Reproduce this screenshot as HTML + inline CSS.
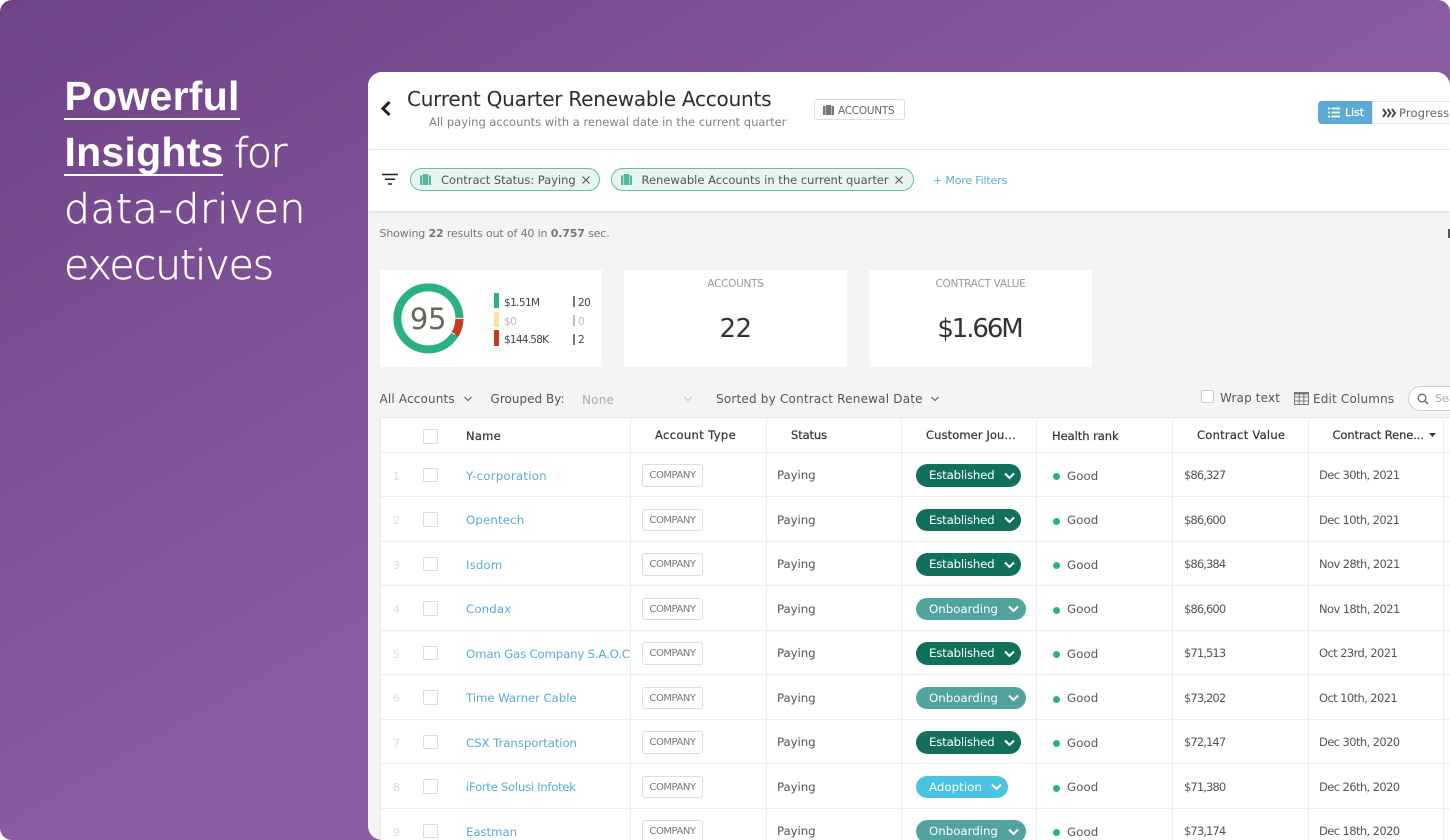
<!DOCTYPE html>
<html lang="en"><head><meta charset="utf-8"><title>Powerful Insights</title>
<style>
*{box-sizing:border-box}
html,body{margin:0;padding:0;width:1450px;height:840px;overflow:hidden;background:#fff}
body{font-family:"DejaVu Sans","Liberation Sans",sans-serif;position:relative}
#bg{position:absolute;left:0;top:0;width:1450px;height:840px;border-radius:12px;background:linear-gradient(to bottom right,#6f4387 0%,#8b5ba1 50%,#8e5ea4 100%)}
.h{position:absolute;left:64px;color:#fff;white-space:nowrap;font-size:41px;line-height:56px;font-weight:300;-webkit-text-stroke:.55px #fff}
.h b{font-family:"Liberation Sans",sans-serif;font-weight:700;letter-spacing:.25px;font-size:41px;-webkit-text-stroke:0}
.u{position:absolute;background:#fff;height:2px}
#card{position:absolute;left:368px;top:72px;width:1082px;height:768px;background:#f4f4f4;border-radius:14px 14px 0 14px;overflow:hidden}
#in{position:absolute;left:-368px;top:-72px;width:1450px;height:840px;filter:blur(.3px)}
.a{position:absolute;white-space:nowrap}
.t{position:absolute;white-space:nowrap;line-height:20px;height:20px}
.w{position:absolute;background:#fff}
.s{position:absolute;overflow:visible}
.chip{position:absolute;top:168px;height:23px;border:1px solid #5fc0a7;border-radius:12px;background:#e7f4f1}
.k{font-size:10.5px;color:#999;text-align:center;letter-spacing:-.3px}
.n{font-size:26px;color:#333;text-align:center;line-height:30px;height:30px;letter-spacing:-.6px}
.tb{font-size:12px;color:#555;letter-spacing:.15px}
.th{font-size:11.5px;color:#333;letter-spacing:.25px;-webkit-text-stroke:.2px #333}
#tbl{position:absolute;left:380px;top:417px;width:1070px;height:423px;background:#fff;border-top:1px solid #e8e8e8;border-left:1px solid #e8e8e8}
.v{position:absolute;top:417px;width:1px;height:423px;background:#ececec}
.r{position:absolute;left:380px;width:1070px;height:44.5px;border-bottom:1.5px solid #ececec}
.r span,.r i{position:absolute;white-space:nowrap;font-style:normal;line-height:44px;top:0}
.no{left:13px;font-size:11px;color:#ddd;top:2px!important}
.cb{position:absolute;left:43px;top:15px;width:14.5px;height:14.5px;border:1px solid #ddd;background:#fff;border-radius:1px}
.nm{left:86px;width:165px;overflow:hidden;font-size:11.8px;color:#5aaad6;letter-spacing:-.1px;top:1px!important}
.co{position:absolute;left:262px;top:11.5px;width:61px;height:22.5px;border:1px solid #ddd;border-radius:3px;font-size:10px;line-height:21px;color:#777;text-align:center;letter-spacing:-.45px;background:#fff}
.st{left:397px;font-size:11.8px;color:#555;letter-spacing:-.08px;top:.5px!important}
.p{position:absolute;left:536px;top:11.5px;height:22.5px;border-radius:12px;color:#fff;font-size:11.8px;line-height:23px;padding-left:13px;letter-spacing:-.22px}
.p svg{position:absolute;top:7.5px}
.e{width:105px;background:#10705c}.e svg{left:87px}
.o{width:110px;background:#50a49c;letter-spacing:-.02px}.o svg{left:91px}
.ad{width:92px;background:#4bc3df;letter-spacing:.03px}.ad svg{left:74px}
.dot{position:absolute;left:673px;top:20.5px;width:7px;height:7px;border-radius:50%;background:#2bb17f}
.gd{left:687px;font-size:11.8px;color:#555;top:1px!important;letter-spacing:.05px}
.val{left:804px;font-size:11.5px;color:#555;letter-spacing:-.9px;top:.5px!important}
.dt{left:939px;font-size:11.5px;color:#555;letter-spacing:-.6px;top:.5px!important}
</style></head><body>
<div id="bg"></div>
<div class="h" style="top:68px;left:64.5px"><b>Powerful</b></div><div class="u" style="left:64px;top:118px;width:176px"></div>
<div class="h" style="top:124px;left:64.5px"><b>Insights</b></div><div class="h" style="top:125px;left:234px;letter-spacing:-1.5px">for</div><div class="u" style="left:64px;top:174px;width:159px"></div>
<div class="h" style="top:181px;letter-spacing:.45px">data-driven</div>
<div class="h" style="top:237px;letter-spacing:-1.05px">executives</div>

<div id="card"><div id="in">
<div class="w" style="left:368px;top:72px;width:1082px;height:77px;box-shadow:0 1px 2px #e4e4e4"></div>
<div class="w" style="left:368px;top:150px;width:1082px;height:61px;box-shadow:0 1px 2px #dedede"></div>

<svg class="s" style="left:378px;top:98px" width="16" height="20"><path d="M11.5 4 L5 10.5 L11.5 17" fill="none" stroke="#222" stroke-width="3"/></svg>
<div class="t" style="left:407px;top:89px;font-size:20px;color:#2c2c2c;letter-spacing:-.23px">Current Quarter Renewable Accounts</div>
<div class="t" style="left:429px;top:112px;font-size:11.5px;color:#808080;letter-spacing:-.01px">All paying accounts with a renewal date in the current quarter</div>
<div class="a" style="left:814px;top:99px;width:91px;height:21px;border:1px solid #ddd;border-radius:3px;background:#fff"></div>
<svg class="s" style="left:822px;top:104px" width="13" height="12"><path d="M4 2V1h5v1h3v9H1V2z" fill="#777"/><path d="M3.500 2v9M9.500 2v9" stroke="#fff" stroke-opacity=".5"/></svg>
<div class="t" style="left:838px;top:101px;font-size:10.5px;color:#666;letter-spacing:-.26px">ACCOUNTS</div>

<div class="a" style="left:1318px;top:101px;width:54px;height:23px;background:#5baad3;border-radius:4px 0 0 4px"></div>
<div class="a" style="left:1372px;top:101px;width:78px;height:23px;background:#fff;border:1px solid #e6e6e6;border-right:0"></div>
<svg class="s" style="left:1328px;top:107px" width="12" height="11"><path d="M0 1.500h2M3.500 1.500H12M0 5.500h2M3.500 5.500H12M0 9.500h2M3.500 9.500H12" stroke="#fff" stroke-width="1.700" fill="none"/></svg>
<div class="t" style="left:1345px;top:103px;font-size:11px;color:#fff;-webkit-text-stroke:.3px #fff;letter-spacing:-.1px">List</div>
<svg class="s" style="left:1382px;top:108px" width="14" height="10"><path d="M1 1l3 4-3 4M5.500 1l3 4-3 4M10 1l3 4-3 4" stroke="#444" stroke-width="1.900" fill="none"/></svg>
<div class="t" style="left:1399px;top:103px;font-size:11.5px;color:#666;letter-spacing:.15px">Progress</div>

<svg class="s" style="left:382px;top:173px" width="16" height="12"><path d="M0 1.500h16M3 6.200h10M6 11h4" stroke="#222" stroke-width="1.500" fill="none"/></svg>
<div class="chip" style="left:410px;width:190px"></div>
<svg class="s" style="left:419px;top:174px" width="13" height="12"><path d="M4 1.500V0h5v1.500h3V11H1V1.500z" fill="#55b9a0"/><path d="M3.500 2v9M9.500 2v9" stroke="#e7f4f1" stroke-opacity=".6"/></svg>
<div class="t" style="left:441px;top:170px;font-size:11.5px;color:#555;letter-spacing:-.03px">Contract Status: Paying</div>
<svg class="s" style="left:582px;top:176px" width="8" height="8"><path d="M.5.500l7 7M7.500.500l-7 7" stroke="#555" stroke-width="1.100"/></svg>
<div class="chip" style="left:611px;width:303px"></div>
<svg class="s" style="left:620px;top:174px" width="13" height="12"><path d="M4 1.500V0h5v1.500h3V11H1V1.500z" fill="#55b9a0"/><path d="M3.500 2v9M9.500 2v9" stroke="#e7f4f1" stroke-opacity=".6"/></svg>
<div class="t" style="left:641.5px;top:170px;font-size:11.5px;color:#555;letter-spacing:0">Renewable Accounts in the current quarter</div>
<svg class="s" style="left:895px;top:176px" width="8" height="8"><path d="M.5.500l7 7M7.500.500l-7 7" stroke="#555" stroke-width="1.100"/></svg>
<div class="t" style="left:933px;top:170.500px;font-size:11px;color:#5aaed6;letter-spacing:-.17px">+ More Filters</div>

<div class="t" style="left:379.500px;top:224px;font-size:11px;color:#777;letter-spacing:-.15px">Showing <b>22</b> results out of 40 in <b>0.757</b> sec.</div>
<div class="a" style="left:1448px;top:229px;width:2px;height:9px;background:#555"></div>

<div class="w" style="left:380px;top:270px;width:222px;height:97px"></div>
<svg class="s" style="left:388px;top:278px" width="82" height="82">
<circle cx="40.400" cy="40.400" r="31" fill="none" stroke="#2bb17f" stroke-width="8"/>
<path d="M71.400 40.400A31 31 0 0 1 66.700 56.800" fill="none" stroke="#c8391f" stroke-width="8"/>
<path d="M62 40.400h14M59.500 52l7.500 4.500" stroke="#fff" stroke-width="1"/>
</svg>
<div class="t" style="left:398px;top:303.500px;width:60px;height:30px;line-height:30px;text-align:center;font-size:29px;color:#6b6659;letter-spacing:-.3px">95</div>
<div class="a" style="left:494px;top:293px;width:5px;height:15px;background:#2bb17f"></div>
<div class="a" style="left:494px;top:312px;width:5px;height:15px;background:#fbe29d"></div>
<div class="a" style="left:494px;top:330px;width:5px;height:16px;background:#c8391f"></div>
<div class="t" style="left:504px;top:292.500px;font-size:10.500px;color:#444;letter-spacing:-.6px">$1.51M</div>
<div class="t" style="left:504px;top:311.500px;font-size:10.500px;color:#bbb;letter-spacing:-.5px">$0</div>
<div class="t" style="left:504px;top:329.500px;font-size:10.500px;color:#444;letter-spacing:-.75px">$144.58K</div>
<div class="a" style="left:573px;top:296px;width:1.500px;height:11px;background:#777"></div>
<div class="a" style="left:573px;top:315px;width:1.500px;height:11px;background:#bbb"></div>
<div class="a" style="left:573px;top:334px;width:1.500px;height:11px;background:#777"></div>
<div class="t" style="left:578px;top:292.500px;font-size:10.500px;color:#444;letter-spacing:-.5px">20</div>
<div class="t" style="left:578px;top:311.500px;font-size:10.500px;color:#bbb">0</div>
<div class="t" style="left:578px;top:329.500px;font-size:10.500px;color:#444">2</div>

<div class="w" style="left:624px;top:270px;width:223px;height:97px"></div>
<div class="t k" style="left:624px;top:274px;width:223px">ACCOUNTS</div>
<div class="t n" style="left:624px;top:314px;width:223px">22</div>
<div class="w" style="left:869px;top:270px;width:223px;height:97px"></div>
<div class="t k" style="left:869px;top:274px;width:223px">CONTRACT VALUE</div>
<div class="t n" style="left:868px;top:314px;width:223px;letter-spacing:-2.1px">$1.66M</div>

<div class="t tb" style="left:379.500px;top:389px;letter-spacing:.16px">All Accounts</div>
<svg class="s" style="left:464px;top:396px" width="8" height="6"><path d="M.5 1l3.500 3.500L7.500 1" fill="none" stroke="#555" stroke-width="1"/></svg>
<div class="t tb" style="left:490.500px;top:389px;letter-spacing:.02px">Grouped By:</div>
<div class="t tb" style="left:582px;top:390px;color:#aaa;letter-spacing:.2px">None</div>
<svg class="s" style="left:684px;top:396px" width="8" height="6"><path d="M.5 1l3.500 3.500L7.500 1" fill="none" stroke="#bbb" stroke-width="1"/></svg>
<div class="t tb" style="left:716px;top:389px;letter-spacing:.2px">Sorted by Contract Renewal Date</div>
<svg class="s" style="left:931px;top:396px" width="8" height="6"><path d="M.5 1l3.500 3.500L7.500 1" fill="none" stroke="#555" stroke-width="1"/></svg>
<div class="a" style="left:1201px;top:390px;width:13px;height:13px;background:#fff;border:1px solid #ccc;border-radius:2px"></div>
<div class="t tb" style="left:1220px;top:387.500px">Wrap text</div>
<svg class="s" style="left:1294px;top:392px" width="15" height="13"><rect x=".5" y=".5" width="14" height="12" fill="none" stroke="#777"/><path d="M0 1.500h15" stroke="#777" stroke-width="2"/><path d="M.5 5h14M.5 9h14M5.200.500v12M9.800.500v12" stroke="#777"/></svg>
<div class="t tb" style="left:1313px;top:389px;letter-spacing:.17px">Edit Columns</div>
<div class="a" style="left:1408px;top:386px;width:60px;height:25px;border:1px solid #d0d0d0;border-radius:13px;background:#fff"></div>
<svg class="s" style="left:1417px;top:393px" width="12" height="12"><circle cx="5" cy="5" r="3.800" fill="none" stroke="#666" stroke-width="1.300"/><path d="M8 8l3 3" stroke="#666" stroke-width="1.400"/></svg>
<div class="t" style="left:1435px;top:388.500px;font-size:11px;color:#aaa">Search</div>

<div id="tbl"></div>
<div class="th t" style="left:466px;top:425.500px">Name</div>
<div class="th t" style="left:655px;top:425px;letter-spacing:.38px">Account Type</div>
<div class="th t" style="left:791px;top:425px;letter-spacing:-.1px">Status</div>
<div class="th t" style="left:926px;top:425px;letter-spacing:.1px">Customer Jou...</div>
<div class="th t" style="left:1052px;top:426px;letter-spacing:-.05px">Health rank</div>
<div class="th t" style="left:1197px;top:425px;letter-spacing:.25px">Contract Value</div>
<div class="th t" style="left:1332.500px;top:425px;letter-spacing:-.1px">Contract Rene...</div>
<svg class="s" style="left:1429px;top:433px" width="8" height="5"><path d="M0 0h7L3.500 4z" fill="#333"/></svg>
<div class="cb" style="left:423px;top:429px"></div>

<div class="r" style="top:408px;height:45px;background:transparent;border-bottom:1.500px solid #ececec"></div>
<div class="r" style="top:452.500px"><span class="no">1</span><div class="cb"></div><span class="nm" style="letter-spacing:.22px">Y-corporation</span><div class="co">COMPANY</div><span class="st">Paying</span><div class="p e">Established<svg width="14" height="9"><path d="M2 1.500l4.500 4.500 4.500-4.500" fill="none" stroke="#fff" stroke-width="2"/></svg></div><div class="dot"></div><span class="gd">Good</span><span class="val">$86,327</span><span class="dt">Dec 30th, 2021</span></div>
<div class="r" style="top:497px"><span class="no">2</span><div class="cb"></div><span class="nm" style="letter-spacing:.12px">Opentech</span><div class="co">COMPANY</div><span class="st">Paying</span><div class="p e">Established<svg width="14" height="9"><path d="M2 1.500l4.500 4.500 4.500-4.500" fill="none" stroke="#fff" stroke-width="2"/></svg></div><div class="dot"></div><span class="gd">Good</span><span class="val">$86,600</span><span class="dt">Dec 10th, 2021</span></div>
<div class="r" style="top:541.500px"><span class="no">3</span><div class="cb"></div><span class="nm" style="letter-spacing:.1px">Isdom</span><div class="co">COMPANY</div><span class="st">Paying</span><div class="p e">Established<svg width="14" height="9"><path d="M2 1.500l4.500 4.500 4.500-4.500" fill="none" stroke="#fff" stroke-width="2"/></svg></div><div class="dot"></div><span class="gd">Good</span><span class="val">$86,384</span><span class="dt">Nov 28th, 2021</span></div>
<div class="r" style="top:586px"><span class="no">4</span><div class="cb"></div><span class="nm" style="letter-spacing:.1px">Condax</span><div class="co">COMPANY</div><span class="st">Paying</span><div class="p o">Onboarding<svg width="14" height="9"><path d="M2 1.500l4.500 4.500 4.500-4.500" fill="none" stroke="#fff" stroke-width="2"/></svg></div><div class="dot"></div><span class="gd">Good</span><span class="val">$86,600</span><span class="dt">Nov 18th, 2021</span></div>
<div class="r" style="top:630.500px"><span class="no">5</span><div class="cb"></div><span class="nm" style="letter-spacing:-.22px">Oman Gas Company S.A.O.C</span><div class="co">COMPANY</div><span class="st">Paying</span><div class="p e">Established<svg width="14" height="9"><path d="M2 1.500l4.500 4.500 4.500-4.500" fill="none" stroke="#fff" stroke-width="2"/></svg></div><div class="dot"></div><span class="gd">Good</span><span class="val">$71,513</span><span class="dt">Oct 23rd, 2021</span></div>
<div class="r" style="top:675px"><span class="no">6</span><div class="cb"></div><span class="nm">Time Warner Cable</span><div class="co">COMPANY</div><span class="st">Paying</span><div class="p o">Onboarding<svg width="14" height="9"><path d="M2 1.500l4.500 4.500 4.500-4.500" fill="none" stroke="#fff" stroke-width="2"/></svg></div><div class="dot"></div><span class="gd">Good</span><span class="val">$73,202</span><span class="dt">Oct 10th, 2021</span></div>
<div class="r" style="top:719.500px"><span class="no">7</span><div class="cb"></div><span class="nm">CSX Transportation</span><div class="co">COMPANY</div><span class="st">Paying</span><div class="p e">Established<svg width="14" height="9"><path d="M2 1.500l4.500 4.500 4.500-4.500" fill="none" stroke="#fff" stroke-width="2"/></svg></div><div class="dot"></div><span class="gd">Good</span><span class="val">$72,147</span><span class="dt">Dec 30th, 2020</span></div>
<div class="r" style="top:764px"><span class="no">8</span><div class="cb"></div><span class="nm" style="letter-spacing:-.35px">iForte Solusi Infotek</span><div class="co">COMPANY</div><span class="st">Paying</span><div class="p ad">Adoption<svg width="14" height="9"><path d="M2 1.500l4.500 4.500 4.500-4.500" fill="none" stroke="#fff" stroke-width="2"/></svg></div><div class="dot"></div><span class="gd">Good</span><span class="val">$71,380</span><span class="dt">Dec 26th, 2020</span></div>
<div class="r" style="top:808.500px;border-bottom:0"><span class="no">9</span><div class="cb"></div><span class="nm">Eastman</span><div class="co">COMPANY</div><span class="st">Paying</span><div class="p o">Onboarding<svg width="14" height="9"><path d="M2 1.500l4.500 4.500 4.500-4.500" fill="none" stroke="#fff" stroke-width="2"/></svg></div><div class="dot"></div><span class="gd">Good</span><span class="val">$73,174</span><span class="dt">Dec 18th, 2020</span></div>

<div class="v" style="left:630px"></div><div class="v" style="left:766px"></div><div class="v" style="left:901px"></div><div class="v" style="left:1036px"></div><div class="v" style="left:1172px"></div><div class="v" style="left:1308px"></div><div class="v" style="left:1443px"></div>
</div></div>
</body></html>
